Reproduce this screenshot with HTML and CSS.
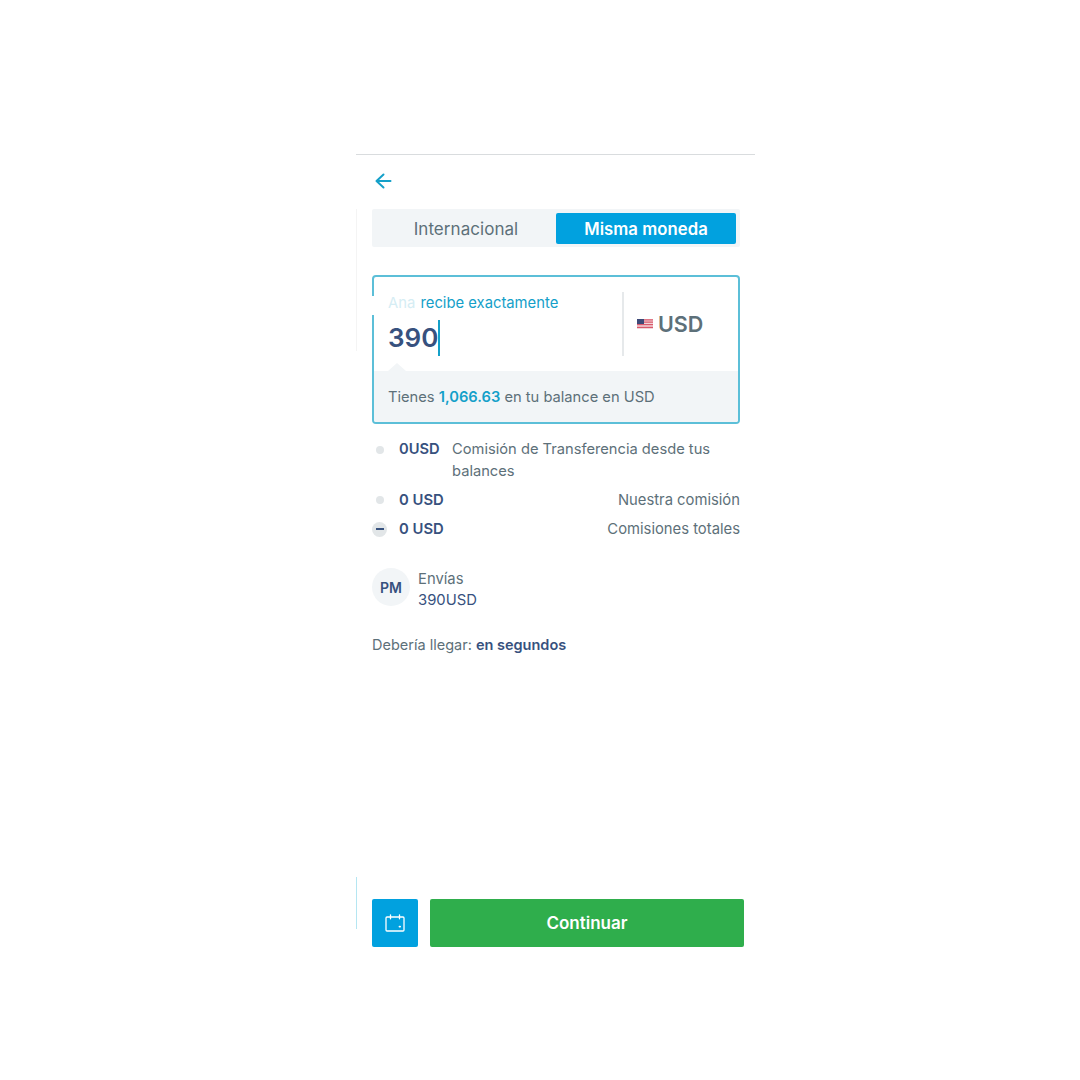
FILE: index.html
```html
<!DOCTYPE html>
<html lang="es">
<head>
    <meta charset="UTF-8">
    <meta name="viewport" content="width=device-width, initial-scale=1.0">
    <title>Misma moneda</title>
    <link rel="stylesheet" href="styles.css">
</head>
<body>
    <div class="screen">
        <span class="edge edge-top"></span>
        <span class="edge edge-bottom"></span>

        <button type="button" class="back-btn" aria-label="Volver">
            <svg width="18" height="16" viewBox="0 0 18 16" fill="none" stroke="#14a0c9" stroke-width="2" stroke-linecap="round" stroke-linejoin="round">
                <path d="M15.5 8H1.5M8.5 1.5L1.5 8L8.5 14.5"/>
            </svg>
        </button>

        <div class="tabs">
            <div class="tab">Internacional</div>
            <div class="tab active">Misma moneda</div>
        </div>

        <div class="amount-card">
            <div class="amount-top">
                <div class="amount-field">
                    <div class="amount-label"><span class="name-faded">Ana</span> recibe exactamente</div>
                    <div class="amount-value">390</div>
                </div>
                <div class="currency">
                    <svg class="flag" width="16" height="10" viewBox="0 0 16 10">
                        <rect width="16" height="10" fill="#f0d5d8"/>
                        <path d="M0 .8h16M0 3.2h16M0 5.6h16M0 8.4h16" stroke="#d9596c" stroke-width="1.3"/>
                        <rect width="7" height="5" fill="#3d4a78"/>
                    </svg>
                    <span>USD</span>
                </div>
            </div>
            <div class="balance">Tienes <strong>1,066.63</strong> en tu balance en USD</div>
        </div>
        <span class="card-gap"></span>

        <div class="fees">
            <div class="fee-row fee-wrap">
                <span class="fee-mark"><i class="dot"></i></span>
                <strong>0USD</strong>
                <span class="fee-text">Comisión de Transferencia desde tus balances</span>
            </div>
            <div class="fee-row">
                <span class="fee-mark"><i class="dot"></i></span>
                <strong>0 USD</strong>
                <span class="fee-text right">Nuestra comisión</span>
            </div>
            <div class="fee-row">
                <span class="fee-mark"><i class="minus"></i></span>
                <strong>0 USD</strong>
                <span class="fee-text right">Comisiones totales</span>
            </div>
        </div>

        <div class="sender">
            <div class="avatar">PM</div>
            <div class="sender-info">
                <div class="sender-label">Envías</div>
                <div class="sender-amount">390USD</div>
            </div>
        </div>

        <p class="arrival">Debería llegar: <strong>en segundos</strong></p>

        <div class="actions">
            <button type="button" class="schedule-btn" aria-label="Programar">
                <svg width="20" height="18" viewBox="0 0 20 18" fill="none" stroke="#fff" stroke-width="1.3" stroke-linecap="round">
                    <rect x="1" y="3" width="18" height="14" rx="1"/>
                    <path d="M5.5 .8v4M14.5 .8v4"/>
                    <path d="M14.5 12.6h.6" stroke-width="1.8"/>
                </svg>
            </button>
            <button type="button" class="continue-btn">Continuar</button>
        </div>
    </div>
</body>
</html>
```

FILE: styles.css
```css
:root {
    --blue: #01a1df;
    --teal: #14a0c9;
    --navy: #37517e;
    --gray: #5d7079;
    --light: #f2f5f7;
}
* {
    box-sizing: border-box;
}
body {
    margin: 0;
    background: #fff;
    font-family: Inter, 'Noto Sans', sans-serif;
    color: var(--gray);
}
.screen {
    position: relative;
    width: 399px;
    height: 793px;
    margin: 154px 0 0 356px;
    padding: 0 15px 0 16px;
    border-top: 1px solid #d9dcde;
    display: flex;
    flex-direction: column;
}
/* leftover edges of the screenshot */
.edge {
    position: absolute;
    left: 0;
    width: 1px;
}
.edge-top {
    top: 54px;
    height: 142px;
    background: #f4f4f4;
}
.edge-bottom {
    top: 722px;
    height: 52px;
    background: #b5e6f2;
}
.card-gap {
    position: absolute;
    left: 14px;
    top: 141px;
    width: 6px;
    height: 19px;
    background: #fff;
}
.back-btn {
    background: none;
    border: none;
    padding: 0;
    margin: 18px 0 0 3px;
    width: 18px;
    height: 16px;
    display: block;
}
.back-btn svg {
    display: block;
}
.tabs {
    width: 368px;
    height: 38px;
    margin-top: 20px;
    padding: 4px;
    background: var(--light);
    border-radius: 2px;
    display: flex;
}
.tab {
    flex: 1;
    font-size: 17px;
    line-height: 32px;
    text-align: center;
    letter-spacing: 0.05px;
}
.tab.active {
    flex: 0 0 180px;
    height: 31px;
    background: var(--blue);
    color: #fff;
    font-size: 16.7px;
    font-weight: 600;
    border-radius: 2px;
}
.amount-card {
    width: 368px;
    height: 149px;
    margin-top: 28px;
    border: 2px solid #5cbfd8;
    border-radius: 4px;
    overflow: hidden;
}
.amount-top {
    height: 94px;
    display: flex;
    padding: 15px 0 15px 14px;
}
.amount-field {
    width: 236px;
    border-right: 2px solid #e6e9eb;
}
.amount-label {
    font-size: 14.8px;
    line-height: 22px;
    color: var(--teal);
}
.name-faded {
    color: #d5edf4;
    margin-right: 1px;
}
.amount-value {
    display: inline-block;
    margin-top: 6px;
    font-size: 26px;
    font-weight: 600;
    line-height: 36px;
    color: var(--navy);
    border-right: 2px solid var(--teal);
}
.currency {
    display: flex;
    align-items: center;
    gap: 5px;
    padding: 0 0 0 13px;
    font-size: 21.5px;
    font-weight: 600;
}
.balance {
    position: relative;
    height: 55px;
    padding-left: 14px;
    background: var(--light);
    font-size: 14.7px;
    line-height: 52px;
}
.balance::before {
    content: '';
    position: absolute;
    left: 14px;
    top: -8px;
    border-left: 9px solid transparent;
    border-right: 9px solid transparent;
    border-bottom: 8px solid var(--light);
}
.balance strong {
    color: var(--teal);
    font-weight: 600;
}
.fees {
    width: 368px;
    margin-top: 15px;
    font-size: 14.8px;
    line-height: 22px;
}
.fee-row {
    display: flex;
    margin-bottom: 7px;
}
.fee-row.fee-wrap {
    font-size: 14.7px;
    line-height: 21.5px;
    margin-bottom: 7px;
}
.fee-row strong {
    color: var(--navy);
    font-weight: 600;
}
.fee-wrap strong {
    flex: 0 0 53px;
}
.fee-text {
    flex: 1;
}
.fee-text.right {
    text-align: right;
}
.fee-mark {
    flex: 0 0 27px;
    display: flex;
    align-items: center;
    height: 22px;
}
.dot {
    width: 8px;
    height: 8px;
    margin-left: 4px;
    border-radius: 50%;
    background: #e2e6e8;
}
.minus {
    flex: none;
    width: 15px;
    height: 15px;
    border-radius: 50%;
    background: #e2e6e8;
    display: flex;
    align-items: center;
    justify-content: center;
}
.minus::before {
    content: '';
    width: 8px;
    height: 2px;
    background: var(--navy);
}
.sender {
    margin-top: 21px;
    display: flex;
    gap: 8px;
}
.avatar {
    width: 38px;
    height: 38px;
    border-radius: 50%;
    background: var(--light);
    color: var(--navy);
    font-size: 14px;
    font-weight: 600;
    line-height: 39px;
    text-align: center;
}
.sender-info {
    padding-top: 1px;
    font-size: 14.8px;
    line-height: 21px;
}
.sender-amount {
    color: var(--navy);
}
.arrival {
    margin: 23px 0 0;
    font-size: 14.5px;
    line-height: 22px;
}
.arrival strong {
    color: var(--navy);
    font-weight: 600;
}
.actions {
    margin-top: auto;
    width: 372px;
    display: flex;
    gap: 12px;
}
.schedule-btn, .continue-btn {
    height: 48px;
    border: none;
    border-radius: 2px;
    color: #fff;
    font-family: inherit;
}
.schedule-btn {
    width: 46px;
    background: var(--blue);
    padding: 0;
    display: flex;
    align-items: center;
    justify-content: center;
}
.continue-btn {
    flex: 1;
    background: #2fae4c;
    font-size: 17px;
    font-weight: 600;
}
```
